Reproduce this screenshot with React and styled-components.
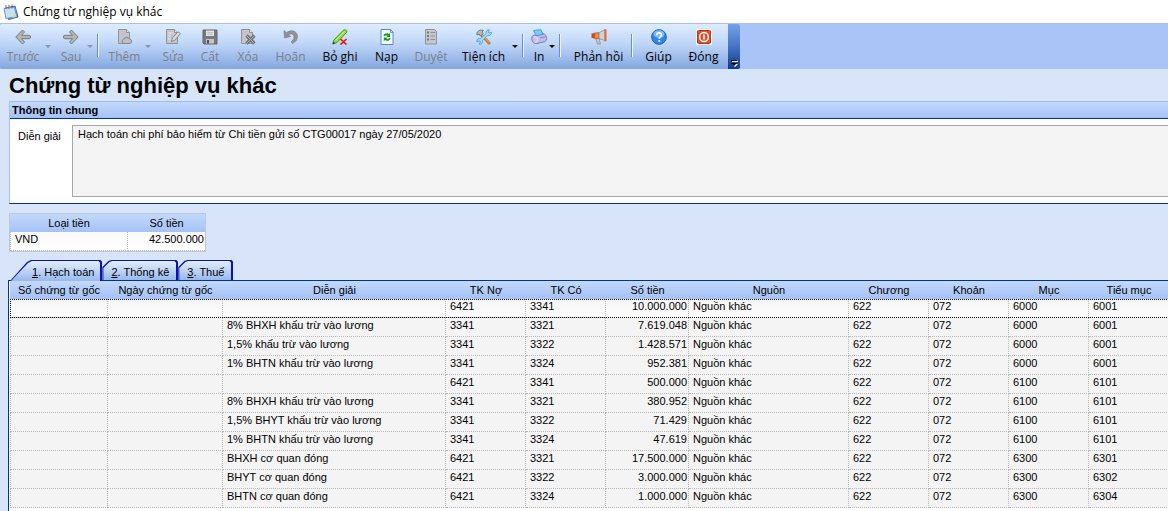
import React, {useState} from 'react';
import styled, {createGlobalStyle, css} from 'styled-components';

const GlobalStyle = createGlobalStyle`
  * {
    box-sizing: border-box;
  }

  body {
    margin: 0;
    background: #d8e4f8;
    color: #000;
    font-family: "Liberation Sans", Arial, sans-serif;
    font-size: 11px;
    line-height: 14px;
  }

  button,
  textarea {
    font: inherit;
    color: inherit;
  }
`;

const Page = styled.div`
  min-height: 100vh;
  display: flex;
  flex-direction: column;
  overflow: hidden;
`;

const TitleBar = styled.header`
  display: flex;
  align-items: center;
  gap: 4px;
  height: 23px;
  padding-left: 3px;
  background: #fff;
  font-family: "Open Sans", "Noto Sans", sans-serif;
  font-size: 12px;
`;

const ToolStrip = styled.div`
  display: flex;
  background: #a9c4f6;
  border-top: 1px solid #a3c0f0;
`;

const ToolBar = styled.div`
  display: flex;
  height: 45px;
  padding-left: 1px;
  border-radius: 2px 0 0 2px;
  background: linear-gradient(#dfecfe, #c3d9f9 40%, #84a7e0);
`;

const ToolButton = styled.button`
  display: flex;
  flex-direction: column;
  align-items: center;
  gap: 4px;
  width: ${({$width}) => $width}px;
  padding: 5px 0 0;
  border: 0;
  background: none;
  font-family: "Open Sans", "Noto Sans", sans-serif;
  font-size: 12px;
  line-height: 16px;
  white-space: nowrap;

  &:disabled {
    color: #7b7f88;
  }
`;

const DropButton = styled.button`
  width: 10px;
  padding: 0 4px 0 0;
  border: 0;
  background: none;
  color: #000;

  &:disabled {
    color: #8d96a8;
  }

  &::before {
    content: "";
    display: block;
    border: 3px solid transparent;
    border-top-color: currentColor;
    border-bottom: 0;
  }
`;

const Separator = styled.span`
  width: 2px;
  height: 23px;
  margin: 10px 5px 0 0;
  border-left: 1px solid #6a8ccb;
  border-right: 1px solid #f1f6fe;
`;

const Overflow = styled.button`
  display: flex;
  align-items: flex-end;
  justify-content: center;
  width: 12px;
  padding: 0;
  border: 0;
  border-radius: 0 2px 2px 0;
  background: linear-gradient(#76a1e9, #4674c4 50%, #0d3b91);
`;

const Heading = styled.h1`
  margin: 0;
  padding: 3px 9px 0;
  height: 32px;
  font-size: 22px;
  line-height: 28px;
`;

const Section = styled.section`
  margin-left: 9px;
  border-left: 1px solid #a3c0f5;
  border-bottom: 1px solid #003399;
  background: #fff;
`;

const SectionTitle = styled.h2`
  margin: 0;
  padding: 1px 2px;
  border-top: 1px solid #9dbcf3;
  border-bottom: 1px solid #003399;
  background: linear-gradient(#c3d9fb, #a4c2f6);
  font-size: 11px;
  line-height: 14px;
`;

const Field = styled.div`
  display: flex;
  padding: 6px 0 6px 8px;

  label {
    width: 54px;
    padding-top: 4px;
  }

  textarea {
    flex: 1;
    height: 72px;
    padding: 1px 5px;
    resize: none;
    outline: 0;
    border: 1px solid #a5a7ab;
    border-right: 0;
    border-radius: 0;
    background: #f4f4f4;
  }
`;

const Table = styled.table`
  border-collapse: separate;
  border-spacing: 0;
  table-layout: fixed;

  thead {
    background: linear-gradient(#c3d9fb, #a4c2f6);
  }

  th {
    height: 18px;
    padding: 0;
    font-weight: normal;
  }

  td {
    height: 19px;
    padding: 0 1px 0 4px;
    vertical-align: top;
    white-space: nowrap;
    border-right: 1px dotted #b9b9b9;
    border-bottom: 1px dotted #b9b9b9;
  }

  td:first-child {
    border-left: 1px dotted #b9b9b9;
  }
`;

const CurrencyTable = styled(Table)`
  width: 197px;
  margin: 9px 0 0 9px;
  border: 1px solid #b9c8de;
  background: linear-gradient(#f4f4f4, #fff);

  td:last-child {
    border-right: 0;
  }
`;

const Tabs = styled.div`
  display: flex;
  margin-bottom: -1px;
  padding: 8px 0 0 10px;
`;

const firstShape = 'polygon(0 100%, 17px 2px, 21px 0, calc(100% - 2px) 0, 100% 2px, 100% 100%)';
const nextShape = 'polygon(0 100%, 0 7px, 6px 1px, 9px 0, calc(100% - 2px) 0, 100% 2px, 100% 100%)';

const Tab = styled.button`
  position: relative;
  z-index: ${({$active}) => ($active ? 1 : 0)};
  height: ${({$active}) => ($active ? 21 : 20)}px;
  padding: ${({$first}) => ($first ? '3px 8px 0 22px' : '3px 9px 0 9px')};
  border: 0;
  background: #0a12b4;
  clip-path: ${({$first}) => ($first ? firstShape : nextShape)};
  line-height: 16px;
  white-space: nowrap;

  &::before {
    content: "";
    position: absolute;
    z-index: -1;
    inset: 1px 2px 0 1px;
    background: linear-gradient(#e3eefe, #98b9ec);
    clip-path: ${({$first}) => ($first ? firstShape : nextShape)};
  }
`;

const GridBox = styled.div`
  flex: 1;
  margin-left: 8px;
  padding-left: 1px;
  border-top: 1px solid #003399;
  border-left: 1px solid #003399;
  background: #fff;
`;

const GridTable = styled(Table)`
  width: 100%;
`;

const Row = styled.tr`
  background: #f4f4f4;

  ${({$current}) => $current && css`
    background: linear-gradient(#f4f4f4, #fff);
    outline: 1px dotted #000;
    outline-offset: -1px;
  `}
`;

const Money = styled.td`
  text-align: right;
`;

function Icon({children}) {
  return (
    <svg width="16" height="16" viewBox="0 0 16 16" fill="none" aria-hidden="true">
      {children}
    </svg>
  );
}

const GRAY = '#84878c';

function GrayPage() {
  return (
    <>
      <path d="M1.5.5h8l3 3v11h-11z" fill="#c3c5c9" stroke="#8f9298"/>
      <path d="M9.500.5v3h3" fill="#e3e5e8" stroke="#8f9298"/>
    </>
  );
}

const icons = {
  back: (
    <path
      d="M7.500 1 .8 8l6.700 7 2-2-3-3.300h7.700a1.500 1.500 0 0 0 1.300-1.700 1.500 1.500 0 0 0-1.300-1.700H6.500l3-3.300z"
      fill="#b4b5b7"
      stroke="#77797d"
    />
  ),
  forward: (
    <path
      d="m8.500 1 6.700 7-6.700 7-2-2 3-3.300H1.800A1.500 1.500 0 0 1 .5 8a1.500 1.500 0 0 1 1.300-1.700h7.700l-3-3.300z"
      fill="#b4b5b7"
      stroke="#77797d"
    />
  ),
  add: (
    <>
      <GrayPage/>
      <path
        d="M5 12.500a2.500 2.500 0 0 1 2-2.500 3 3 0 0 1 5.500 0 2.300 2.300 0 0 1 .5 4.500H7a2 2 0 0 1-2-2z"
        fill="#bbbdc1"
        stroke={GRAY}
      />
    </>
  ),
  edit: (
    <>
      <GrayPage/>
      <path d="M3 4h5M3 7h3M3 10h3" stroke="#e6e8ea"/>
      <path d="m6.500 12.500.8-3.300L13 2.800l2.400 1.900-5.700 6.600z" fill="#dadcdf" stroke={GRAY}/>
    </>
  ),
  save: (
    <>
      <path d="M1 1h14v14H2l-1-1z" fill="#77797d" stroke="#626468"/>
      <path d="M4 1.500h8V7H4z" fill="#e1e3e5"/>
      <path d="M5.500 3.500h5M5.500 5.300h5" stroke="#a9acb0" strokeWidth=".7"/>
      <path d="M4 10h8v4.500H4z" fill="#c4c6ca"/>
      <path d="M5 11h2v3.500H5z" fill="#4e5054"/>
    </>
  ),
  remove: (
    <>
      <GrayPage/>
      <path d="m6.500 6.500 8 8m0-8-8 8" stroke="#6d7075" strokeWidth="3.200"/>
      <path d="m6.500 6.500 8 8m0-8-8 8" stroke="#b5b8bd"/>
    </>
  ),
  undo: (
    <path
      d="M1 1.500 1.500 9l6-1.500-2-1.700c3-1.600 5.500-.3 5.500 2.200 0 2-1 3.500-3 5l1.500 1.500c3.500-2 5-4 5-7C14.500 2 8 0 3.500 3.800z"
      fill="#8e9197"
      stroke="#787c83"
      strokeWidth=".6"
    />
  ),
  unpost: (
    <>
      <path d="m1.500 11.500 9.500-10c1.500-1.500 5-.3 3.500 2L5 13.500l-4 1.300z" fill="#8fe03c" stroke="#4a9a1c"/>
      <path d="m4 11 8.500-8.500" stroke="#d3fa9d"/>
      <path d="m.5 15.500.8-3 2 1.800z" fill="#333"/>
      <path d="m8.500 10 6 5.500m0-5.500-6 5.500" stroke="#f01010" strokeWidth="1.600"/>
    </>
  ),
  reload: (
    <>
      <path d="M2 .5h9.500l2.500 2.500v12.500H2z" fill="#f4faff" stroke="#5f86c4"/>
      <path d="M11.500.5v2.800H14" stroke="#5f86c4"/>
      <path d="M4.500 7C5 4 8.500 3.500 10 5l1-1v4H7.500l1.200-1.300C7.500 5.800 6.500 6 6 7z" fill="#0a9b12"/>
      <path d="M11.500 9c-.5 3-4 3.500-5.500 2l-1.200 1.200V8.500h3.700L7.300 9.700c1 .8 2 .6 2.600-.7z" fill="#0a9b12"/>
    </>
  ),
  approve: (
    <>
      <path d="M2.500.5h9l2 2v12.500h-11z" fill="#c6c8cb" stroke="#8f9298"/>
      <path d="M4 3.500h2M4 7h2M4 10.500h2" stroke="#77797d" strokeWidth="2"/>
      <path d="M7.500 3.500H12M7.500 7H12M7.500 10.500H12" stroke="#8c8f94"/>
    </>
  ),
  tools: (
    <>
      <path d="m5 5.500 8 8.500" stroke="#c57a1d" strokeWidth="3" strokeLinecap="round"/>
      <path d="m5 5 8 8.500" stroke="#f6bd62"/>
      <path d="M1 6C0 3 3.500 0 7.500 1.500L6 3l1 1.500L4.500 7 3 5z" fill="#b7bcc4" stroke="#5d6168" strokeWidth=".8"/>
      <path
        d="M10 3.500C10 1.500 12 .3 13.500 1L12 3l1 1.200L15.300 3C16 5 14 7 11.800 6.300l-5.500 5.500C7 14 5 16 3 15l1.500-2-1-1.200L1 13c-.7-2.500 1.500-4.200 3.500-3.500L10 4.700z"
        fill="#a6dcfc"
        stroke="#3489cf"
        strokeWidth=".7"
      />
    </>
  ),
  print: (
    <>
      <path
        d="M.8 9C.8 6.500 3 5.500 5 6.300l7-1.500c2.500.3 3.500 2 3.500 4.700 0 2.500-1.500 3.500-3.500 3.500l-6 1.500c-3.500.5-5.200-2-5.200-5.500z"
        fill="#c3beec"
        stroke="#716ba8"
        strokeWidth=".9"
      />
      <path d="M2.500 1.500 10 .7l2 4.600-6.500 1.500z" fill="#79ccf7" stroke="#2f91d4" strokeWidth=".8"/>
      <path d="M3 8.300c2-1 3 0 3.500 2.200S5 13.500 4 13" stroke="#efedfd"/>
      <path d="m9 9 5-1.200" stroke="#8781c2"/>
    </>
  ),
  megaphone: (
    <>
      <path d="m4.500 9 4.500-.5-.5 3 1 3.500H6.500z" fill="#c3c8cd" stroke="#7b8189" strokeWidth=".7"/>
      <path d="M.5 4.500 4 4v5.500L.5 9z" fill="#ce4b13"/>
      <path d="M3.500 4 8 3.700v5.800l-4.500-.3z" fill="#f28a48" stroke="#b8430f" strokeWidth=".7"/>
      <path d="m8 3.700 6-3v11L8 9.500z" fill="#ccd1d6" stroke="#80868e" strokeWidth=".7"/>
      <path d="M13.500.3h2v12h-2z" fill="#e8692a"/>
    </>
  ),
  help: (
    <>
      <circle cx="8" cy="8" r="7.300" fill="#2f86e6" stroke="#1a5bb2"/>
      <ellipse cx="8" cy="5" rx="5.500" ry="3.800" fill="#77bbfa"/>
      <path d="M5.700 6.200C5.700 3 10.500 3 10.500 6c0 1.800-2.300 1.900-2.300 3.800" stroke="#fff" strokeWidth="1.700"/>
      <path d="M7.300 11h1.900v1.800H7.300z" fill="#fff"/>
    </>
  ),
  close: (
    <>
      <rect width="16" height="16" rx="1" fill="#fff"/>
      <rect x="1.500" y="1.500" width="13" height="13" rx="1" fill="#e24d26" stroke="#c6330f"/>
      <circle cx="8" cy="8" r="4.400" stroke="#fff" strokeWidth="1.500"/>
      <path d="M8 5.500v5" stroke="#fff" strokeWidth="1.600"/>
    </>
  ),
};

const tools = [
  {label: 'Trước', icon: 'back', width: 44, off: true, drop: true},
  {label: 'Sau', icon: 'forward', width: 32, off: true, drop: true, sep: true},
  {label: 'Thêm', icon: 'add', width: 41, off: true, drop: true},
  {label: 'Sửa', icon: 'edit', width: 36, off: true},
  {label: 'Cất', icon: 'save', width: 38, off: true},
  {label: 'Xóa', icon: 'remove', width: 38, off: true},
  {label: 'Hoãn', icon: 'undo', width: 47, off: true},
  {label: 'Bỏ ghi', icon: 'unpost', width: 52},
  {label: 'Nạp', icon: 'reload', width: 41},
  {label: 'Duyệt', icon: 'approve', width: 48, off: true},
  {label: 'Tiện ích', icon: 'tools', width: 57, drop: true, sep: true},
  {label: 'In', icon: 'print', width: 20, drop: true, sep: true},
  {label: 'Phản hồi', icon: 'megaphone', width: 65, sep: true},
  {label: 'Giúp', icon: 'help', width: 41},
  {label: 'Đóng', icon: 'close', width: 49},
];

const tabs = ['Hạch toán', 'Thống kê', 'Thuế'];

const columns = [
  {title: 'Số chứng từ gốc', width: 98},
  {title: 'Ngày chứng từ gốc', width: 115},
  {title: 'Diễn giải', width: 223},
  {title: 'TK Nợ', width: 80},
  {title: 'TK Có', width: 80},
  {title: 'Số tiền', width: 83},
  {title: 'Nguồn', width: 160},
  {title: 'Chương', width: 80},
  {title: 'Khoản', width: 80},
  {title: 'Mục', width: 80},
  {title: 'Tiểu mục', width: 80},
];

const entries = [
  ['', '6421', '3341', '10.000.000', '6000', '6001'],
  ['8% BHXH khấu trừ vào lương', '3341', '3321', '7.619.048', '6000', '6001'],
  ['1,5% khấu trừ vào lương', '3341', '3322', '1.428.571', '6000', '6001'],
  ['1% BHTN khấu trừ vào lương', '3341', '3324', '952.381', '6000', '6001'],
  ['', '6421', '3341', '500.000', '6100', '6101'],
  ['8% BHXH khấu trừ vào lương', '3341', '3321', '380.952', '6100', '6101'],
  ['1,5% BHYT khấu trừ vào lương', '3341', '3322', '71.429', '6100', '6101'],
  ['1% BHTN khấu trừ vào lương', '3341', '3324', '47.619', '6100', '6101'],
  ['BHXH cơ quan đóng', '6421', '3321', '17.500.000', '6300', '6301'],
  ['BHYT cơ quan đóng', '6421', '3322', '3.000.000', '6300', '6302'],
  ['BHTN cơ quan đóng', '6421', '3324', '1.000.000', '6300', '6304'],
];

function App() {
  const [note, setNote] = useState('Hạch toán chi phí bảo hiểm từ Chi tiền gửi số CTG00017 ngày 27/05/2020');
  const [activeTab, setActiveTab] = useState(0);
  const [current, setCurrent] = useState(0);

  return (
    <Page>
      <GlobalStyle/>
      <TitleBar>
        <Icon>
          <path d="M2.500 4 12 2l3 11-9.500 2.500z" fill="#4d8fe0" stroke="#4a63b8"/>
          <path d="M1 4.500 11.500 3l2 9.500-10.500 2z" fill="#c5e0fa" stroke="#6a93d0"/>
          <path d="m9 14 4.500-1.500-1-3z" fill="#f4dc5a"/>
          <path d="M3 1v4M6 .8v4M9 .6v4" stroke="#6b6a55"/>
        </Icon>
        Chứng từ nghiệp vụ khác
      </TitleBar>
      <ToolStrip>
        <ToolBar>
          {tools.map(({label, icon, width, off, drop, sep}) => (
            <React.Fragment key={label}>
              <ToolButton type="button" $width={width} disabled={off}>
                <Icon>{icons[icon]}</Icon>
                {label}
              </ToolButton>
              {drop && <DropButton type="button" disabled={off} aria-label={label}/>}
              {sep && <Separator/>}
            </React.Fragment>
          ))}
        </ToolBar>
        <Overflow type="button" aria-label="Tiện ích">
          <svg width="8" height="10" viewBox="0 0 8 10" aria-hidden="true">
            <path d="M2 2h6v1H2zM2 5h6L5 8z" fill="#fff"/>
            <path d="M1 1h6v1H1zM1 4h6L4 7z" fill="#000"/>
          </svg>
        </Overflow>
      </ToolStrip>
      <Heading>Chứng từ nghiệp vụ khác</Heading>
      <Section>
        <SectionTitle>Thông tin chung</SectionTitle>
        <Field>
          <label htmlFor="note">Diễn giải</label>
          <textarea id="note" value={note} onChange={(e) => setNote(e.target.value)}/>
        </Field>
      </Section>
      <CurrencyTable>
        <colgroup>
          <col width="118"/>
          <col/>
        </colgroup>
        <thead>
          <tr>
            <th>Loại tiền</th>
            <th>Số tiền</th>
          </tr>
        </thead>
        <tbody>
          <tr>
            <td>VND</td>
            <Money>42.500.000</Money>
          </tr>
        </tbody>
      </CurrencyTable>
      <Tabs>
        {tabs.map((name, index) => (
          <Tab
            key={name}
            type="button"
            $first={index === 0}
            $active={index === activeTab}
            onClick={() => setActiveTab(index)}
          >
            <u>{index + 1}</u>. {name}
          </Tab>
        ))}
      </Tabs>
      <GridBox>
        <GridTable>
          <colgroup>
            {columns.map(({title, width}) => (
              <col key={title} width={width}/>
            ))}
          </colgroup>
          <thead>
            <tr>
              {columns.map(({title}) => (
                <th key={title}>{title}</th>
              ))}
            </tr>
          </thead>
          <tbody>
            {entries.map(([text, debit, credit, amount, item, subItem], index) => (
              <Row key={index} $current={index === current} onClick={() => setCurrent(index)}>
                <td/>
                <td/>
                <td>{text}</td>
                <td>{debit}</td>
                <td>{credit}</td>
                <Money>{amount}</Money>
                <td>Nguồn khác</td>
                <td>622</td>
                <td>072</td>
                <td>{item}</td>
                <td>{subItem}</td>
              </Row>
            ))}
          </tbody>
        </GridTable>
      </GridBox>
    </Page>
  );
}

export default App;
